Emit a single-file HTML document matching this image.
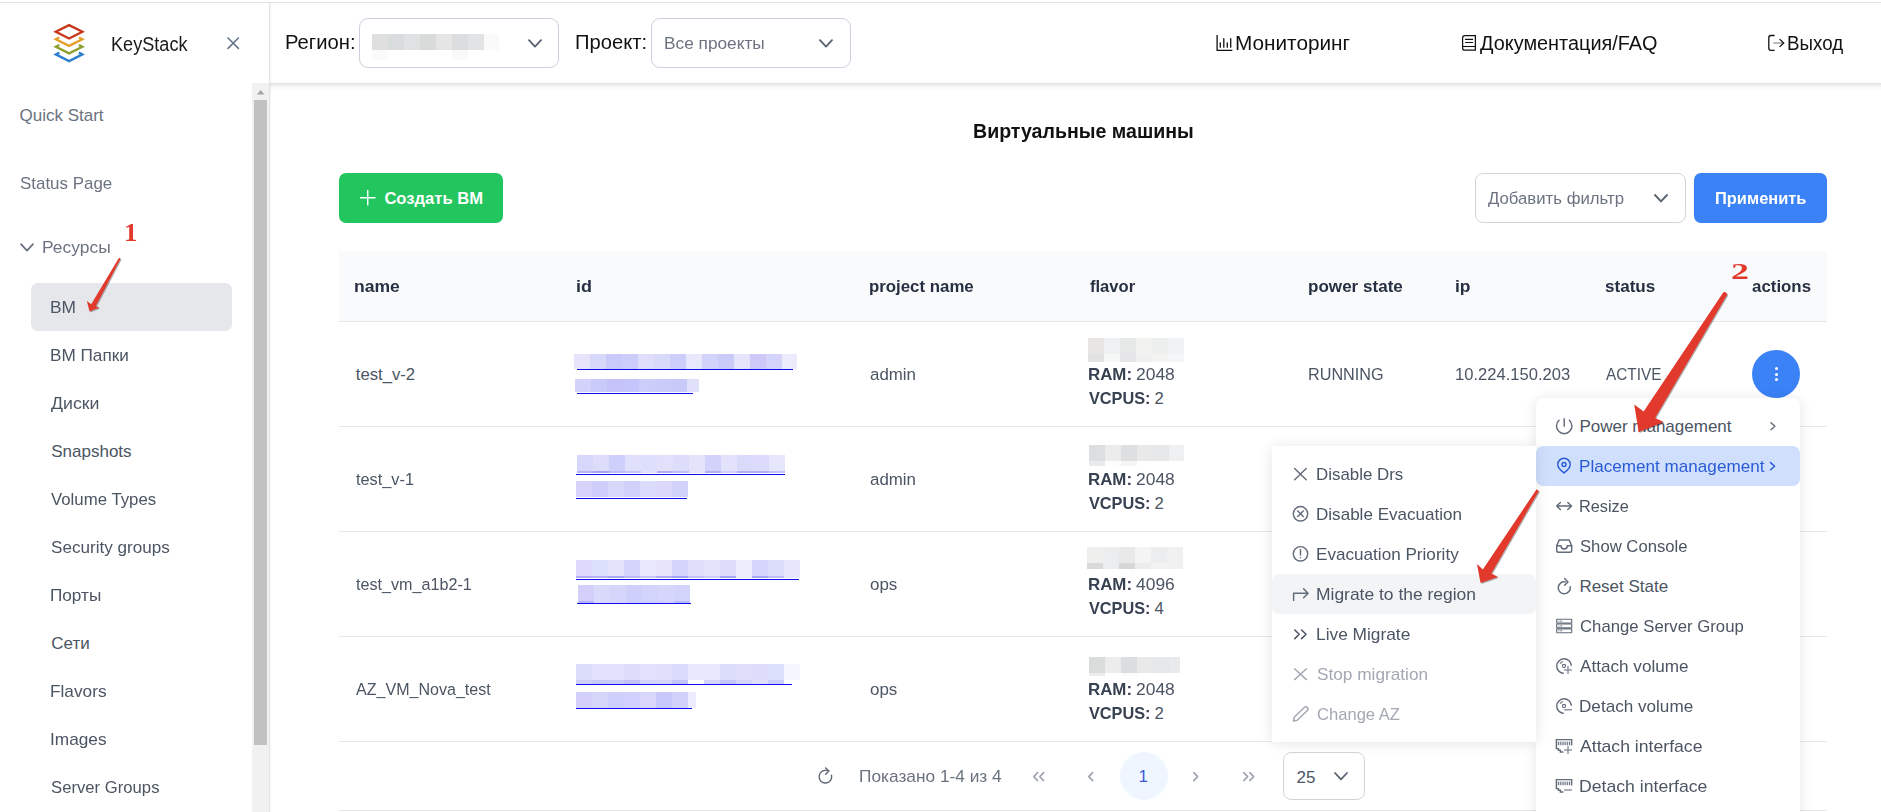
<!DOCTYPE html>
<html lang="ru">
<head>
<meta charset="utf-8">
<title>KeyStack - Виртуальные машины</title>
<style>
html,body{margin:0;padding:0}
body{width:1881px;height:812px;overflow:hidden;background:#fff;position:relative;font-family:"Liberation Sans",sans-serif}
.b{position:absolute;box-sizing:border-box;display:block}
.t{position:absolute;white-space:pre;transform-origin:0 50%;display:block}
svg.b{overflow:visible}
</style>
</head>
<body>
<div class="b" style="left:270px;top:83px;width:1611px;height:9px;background:linear-gradient(180deg,#e0e0e0 0,#e8e8e8 12%,#efefef 24%,#f5f5f5 38%,#f9f9f9 52%,#fcfcfc 70%,#fff 100%)"></div>
<div class="b" style="left:0px;top:2px;width:1881px;height:1px;background:#e2e4e2"></div>
<aside>
<div class="b" style="left:0px;top:3px;width:269px;height:809px;background:#fff"></div>
<div class="b" style="left:269px;top:3px;width:1px;height:809px;background:#e4e4e4"></div>
<div class="b" style="left:270px;top:3px;width:2px;height:809px;background:linear-gradient(90deg,rgba(0,0,0,.045),rgba(0,0,0,0))"></div>
<div class="b" style="left:252px;top:83px;width:17px;height:729px;background:#f1f1f1"></div>
<div class="b" style="left:254px;top:100px;width:13px;height:645px;background:#c1c1c1"></div>
<svg class="b" style="left:256.8px;top:89.8px;" width="7.4" height="4.4" viewBox="0 0 7.4 4.4"><path d="M0 4.4 L3.7 0 L7.4 4.4 Z" fill="#a3a3a3"/></svg>
<svg class="b" style="left:52px;top:22px;" width="35" height="42" viewBox="0 0 35 42">
<g fill="none" stroke-width="2.3" stroke-linejoin="miter">
<path d="M17.1 3.1 L30.4 9.8 L17.1 16.5 L3.8 9.8 Z" stroke="#c8371c"/>
<path d="M7.3 15.45 L3.8 17.2 L17.1 23.9 L30.4 17.2 L26.9 15.45" stroke="#e6a028"/>
<path d="M7.3 22.95 L3.8 24.7 L17.1 31.4 L30.4 24.7 L26.9 22.95" stroke="#8ea02c"/>
<path d="M7.3 30.65 L3.8 32.4 L17.1 39.1 L30.4 32.4 L26.9 30.65" stroke="#2f7fd0"/>
</g></svg>
<span class="t" style="left:111.09px;top:34.00px;font-size:20px;line-height:20px;color:#1a1a1a;transform:scaleX(0.9055);">KeyStack</span>
<svg class="b" style="left:226.8px;top:36.9px;" width="12.4" height="12.4" viewBox="0 0 12.4 12.4"><path d="M0.5 0.5 L11.9 11.9 M11.9 0.5 L0.5 11.9" stroke="#64748b" stroke-width="1.5" fill="none"/></svg>
<span class="t" style="left:19.50px;top:107.00px;font-size:17px;line-height:17px;color:#6b7280;">Quick Start</span>
<span class="t" style="left:19.50px;top:175.00px;font-size:17px;line-height:17px;color:#6b7280;transform:scaleX(0.9955);">Status Page</span>
<svg class="b" style="left:20px;top:243px;" width="14" height="9" viewBox="0 0 14 9"><path d="M1 1.2 L7 7.6 L13 1.2" stroke="#6b7280" stroke-width="1.8" fill="none" stroke-linecap="round" stroke-linejoin="round"/></svg>
<span class="t" style="left:41.97px;top:239.00px;font-size:17px;line-height:17px;color:#6b7280;transform:scaleX(1.0257);">Ресурсы</span>
<div class="b" style="left:31px;top:283px;width:201px;height:47.5px;background:#e5e7eb;border-radius:7px"></div>
<span class="t" style="left:50.23px;top:299.00px;font-size:17px;line-height:17px;color:#4b5563;transform:scaleX(1.0176);">ВМ</span>
<span class="t" style="left:50.24px;top:347.00px;font-size:17px;line-height:17px;color:#4b5563;transform:scaleX(1.0093);">ВМ Папки</span>
<span class="t" style="left:51.25px;top:395.00px;font-size:17px;line-height:17px;color:#4b5563;transform:scaleX(1.0447);">Диски</span>
<span class="t" style="left:51.25px;top:443.00px;font-size:17px;line-height:17px;color:#4b5563;">Snapshots</span>
<span class="t" style="left:51.25px;top:491.00px;font-size:17px;line-height:17px;color:#4b5563;transform:scaleX(0.9879);">Volume Types</span>
<span class="t" style="left:51.25px;top:539.00px;font-size:17px;line-height:17px;color:#4b5563;transform:scaleX(1.0054);">Security groups</span>
<span class="t" style="left:50.24px;top:587.00px;font-size:17px;line-height:17px;color:#4b5563;transform:scaleX(1.0093);">Порты</span>
<span class="t" style="left:51.25px;top:635.00px;font-size:17px;line-height:17px;color:#4b5563;">Сети</span>
<span class="t" style="left:50.24px;top:683.00px;font-size:17px;line-height:17px;color:#4b5563;transform:scaleX(1.0142);">Flavors</span>
<span class="t" style="left:50.24px;top:731.00px;font-size:17px;line-height:17px;color:#4b5563;transform:scaleX(1.0139);">Images</span>
<span class="t" style="left:51.25px;top:779.00px;font-size:17px;line-height:17px;color:#4b5563;transform:scaleX(0.9814);">Server Groups</span>
</aside>
<header>
<span class="t" style="left:284.74px;top:32.00px;font-size:20px;line-height:20px;color:#111;transform:scaleX(1.0116);">Регион:</span>
<div class="b" style="left:359px;top:18px;width:200px;height:49.5px;background:#fff;border:1px solid #cdd0dc;border-radius:9px"></div>
<div class="b" style="left:372px;top:34px;width:16px;height:16px;background:#dedfde"></div>
<div class="b" style="left:388px;top:34px;width:16px;height:16px;background:#d9dcdd"></div>
<div class="b" style="left:404px;top:34px;width:16px;height:16px;background:#e0e1e2"></div>
<div class="b" style="left:420px;top:34px;width:16px;height:16px;background:#d9dada"></div>
<div class="b" style="left:436px;top:34px;width:16px;height:16px;background:#e4e5e4"></div>
<div class="b" style="left:452px;top:34px;width:16px;height:16px;background:#dcdddf"></div>
<div class="b" style="left:468px;top:34px;width:16px;height:16px;background:#e2e3e4"></div>
<div class="b" style="left:484px;top:34px;width:15px;height:16px;background:#fafafa"></div>
<div class="b" style="left:372px;top:50px;width:16px;height:9.7px;background:#fafafa"></div>
<div class="b" style="left:452px;top:50px;width:16px;height:9.7px;background:#f9f9f9"></div>
<svg class="b" style="left:527.5px;top:38.7px;" width="14" height="9" viewBox="0 0 14 9"><path d="M1 1.2 L7 7.6 L13 1.2" stroke="#5b6472" stroke-width="1.9" fill="none" stroke-linecap="round" stroke-linejoin="round"/></svg>
<span class="t" style="left:575.24px;top:32.00px;font-size:20px;line-height:20px;color:#111;transform:scaleX(1.0090);">Проект:</span>
<div class="b" style="left:651px;top:18px;width:200px;height:49.5px;background:#fff;border:1px solid #cdd0dc;border-radius:9px"></div>
<span class="t" style="left:663.98px;top:35.00px;font-size:17px;line-height:17px;color:#6b7280;transform:scaleX(1.0153);">Все проекты</span>
<svg class="b" style="left:818.8px;top:38.7px;" width="14" height="9" viewBox="0 0 14 9"><path d="M1 1.2 L7 7.6 L13 1.2" stroke="#5b6472" stroke-width="1.9" fill="none" stroke-linecap="round" stroke-linejoin="round"/></svg>
<svg class="b" style="left:1215.7px;top:35px;" width="16.5" height="16" viewBox="0 0 16.5 16"><path d="M1.1 0 V15.3 H16.3" fill="none" stroke="#111" stroke-width="1.3"/><path d="M4.3 7.8 V12.2 M7.8 3.7 V12.2 M11.3 7.8 V12.2 M14.7 3.7 V12.2" stroke="#111" stroke-width="1.3" stroke-linecap="round" fill="none"/></svg>
<span class="t" style="left:1234.71px;top:33.00px;font-size:20px;line-height:20px;color:#111;transform:scaleX(1.0376);">Мониторинг</span>
<svg class="b" style="left:1462px;top:35px;" width="14.5" height="16" viewBox="0 0 14.5 16"><path d="M13.4 0.7 H3 Q0.6 0.7 0.6 3.1 V12.9 Q0.6 15.2 3 15.2 H13.4 Z" fill="none" stroke="#111" stroke-width="1.25"/><path d="M3.5 4.4 H10.6 M3.5 7.5 H10.6" stroke="#111" stroke-width="1.1" stroke-linecap="round" fill="none"/><path d="M0.8 11.5 H13.4" stroke="#111" stroke-width="1.1" fill="none"/></svg>
<span class="t" style="left:1480.00px;top:33.00px;font-size:20px;line-height:20px;color:#111;transform:scaleX(0.9939);">Документация/FAQ</span>
<svg class="b" style="left:1768px;top:35px;" width="17" height="16" viewBox="0 0 17 16"><path d="M6.6 0.5 H3 Q0.8 0.5 0.8 2.7 V13.1 Q0.8 15.3 3 15.3 H6.6" fill="none" stroke="#111" stroke-width="1.3"/><path d="M5.2 8 H15" fill="none" stroke="#777" stroke-width="1"/><path d="M11.6 4.1 L15.7 8 L11.6 11.9" fill="none" stroke="#111" stroke-width="1.3"/></svg>
<span class="t" style="left:1787.41px;top:33.00px;font-size:20px;line-height:20px;color:#111;transform:scaleX(0.9379);">Выход</span>
</header>
<main>
<span class="t" style="left:972.69px;top:122.00px;font-size:19.4px;line-height:19.4px;color:#111;font-weight:700;transform:scaleX(1.0094);">Виртуальные машины</span>
<div class="b" style="left:339px;top:173px;width:164px;height:50px;background:#22c55e;border-radius:7px"></div>
<svg class="b" style="left:360.2px;top:190.2px;" width="15.5" height="15.5" viewBox="0 0 15.5 15.5"><path d="M7.75 0 V15.5 M0 7.75 H15.5" stroke="#fff" stroke-width="1.4" fill="none"/></svg>
<span class="t" style="left:384.40px;top:191.00px;font-size:16.6px;line-height:16.6px;color:#fff;font-weight:700;">Создать ВМ</span>
<div class="b" style="left:1475px;top:173px;width:211px;height:50px;background:#fff;border:1px solid #d1d5db;border-radius:8px"></div>
<span class="t" style="left:1488.30px;top:191.00px;font-size:16.7px;line-height:16.7px;color:#6b7280;transform:scaleX(1.0037);">Добавить фильтр</span>
<svg class="b" style="left:1654px;top:194.2px;" width="14" height="8.4" viewBox="0 0 14 8.4"><path d="M1 1 L7 7.4 L13 1" stroke="#5b6472" stroke-width="1.9" fill="none" stroke-linecap="round" stroke-linejoin="round"/></svg>
<div class="b" style="left:1694px;top:173px;width:133px;height:50px;background:#3b82f6;border-radius:7px"></div>
<span class="t" style="left:1714.50px;top:190.00px;font-size:16.4px;line-height:16.4px;color:#fff;font-weight:700;transform:scaleX(1.0032);">Применить</span>
<section>
<div class="b" style="left:339px;top:251px;width:1488px;height:70px;background:#f9fafb"></div>
<div class="b" style="left:339px;top:321px;width:1488px;height:1px;background:#e5e7eb"></div>
<div class="b" style="left:339px;top:426px;width:1488px;height:1px;background:#e5e7eb"></div>
<div class="b" style="left:339px;top:531px;width:1488px;height:1px;background:#e5e7eb"></div>
<div class="b" style="left:339px;top:636px;width:1488px;height:1px;background:#e5e7eb"></div>
<div class="b" style="left:339px;top:741px;width:1488px;height:1px;background:#e5e7eb"></div>
<div class="b" style="left:339px;top:810px;width:1488px;height:1px;background:#e5e7eb"></div>
<span class="t" style="left:353.97px;top:278.00px;font-size:17px;line-height:17px;color:#273043;font-weight:700;transform:scaleX(1.0302);">name</span>
<span class="t" style="left:575.69px;top:278.00px;font-size:17px;line-height:17px;color:#273043;font-weight:700;transform:scaleX(1.0566);">id</span>
<span class="t" style="left:869.01px;top:278.00px;font-size:17px;line-height:17px;color:#273043;font-weight:700;transform:scaleX(0.9894);">project name</span>
<span class="t" style="left:1089.50px;top:278.00px;font-size:17px;line-height:17px;color:#273043;font-weight:700;transform:scaleX(0.9748);">flavor</span>
<span class="t" style="left:1307.90px;top:278.00px;font-size:17px;line-height:17px;color:#273043;font-weight:700;transform:scaleX(1.0041);">power state</span>
<span class="t" style="left:1455.27px;top:278.00px;font-size:17px;line-height:17px;color:#273043;font-weight:700;transform:scaleX(1.0275);">ip</span>
<span class="t" style="left:1605.40px;top:278.00px;font-size:17px;line-height:17px;color:#273043;font-weight:700;transform:scaleX(1.0037);">status</span>
<span class="t" style="left:1752.40px;top:278.00px;font-size:17px;line-height:17px;color:#273043;font-weight:700;transform:scaleX(0.9922);">actions</span>
<span class="t" style="left:355.75px;top:367.00px;font-size:16.7px;line-height:16.7px;color:#4b5563;">test_v-2</span>
<div class="b" style="left:574px;top:354px;width:16px;height:14.6px;background:#e6e3fb"></div>
<div class="b" style="left:590px;top:354px;width:16px;height:14.6px;background:#d8d8fa"></div>
<div class="b" style="left:606px;top:354px;width:16px;height:14.6px;background:#cacafa"></div>
<div class="b" style="left:622px;top:354px;width:16px;height:14.6px;background:#cccdfa"></div>
<div class="b" style="left:638px;top:354px;width:16px;height:14.6px;background:#dfdffb"></div>
<div class="b" style="left:654px;top:354px;width:16px;height:14.6px;background:#d9d9fa"></div>
<div class="b" style="left:670px;top:354px;width:16px;height:14.6px;background:#cecefa"></div>
<div class="b" style="left:686px;top:354px;width:16px;height:14.6px;background:#e8e8fc"></div>
<div class="b" style="left:702px;top:354px;width:16px;height:14.6px;background:#d2d2fa"></div>
<div class="b" style="left:718px;top:354px;width:16px;height:14.6px;background:#cbcbf9"></div>
<div class="b" style="left:734px;top:354px;width:16px;height:14.6px;background:#e4e4fb"></div>
<div class="b" style="left:750px;top:354px;width:16px;height:14.6px;background:#cdc8f8"></div>
<div class="b" style="left:766px;top:354px;width:16px;height:14.6px;background:#d4d4fa"></div>
<div class="b" style="left:782px;top:354px;width:15px;height:14.6px;background:#ebebfc"></div>
<div class="b" style="left:576.5px;top:369px;width:216.25px;height:1.3px;background:#0d0df0"></div>
<div class="b" style="left:575px;top:379px;width:16px;height:12.8px;background:#d2d2fa"></div>
<div class="b" style="left:591px;top:379px;width:16px;height:12.8px;background:#cacafa"></div>
<div class="b" style="left:607px;top:379px;width:16px;height:12.8px;background:#c5c2fa"></div>
<div class="b" style="left:623px;top:379px;width:16px;height:12.8px;background:#c3c5fb"></div>
<div class="b" style="left:639px;top:379px;width:16px;height:12.8px;background:#cdcdfa"></div>
<div class="b" style="left:655px;top:379px;width:16px;height:12.8px;background:#cbcbfa"></div>
<div class="b" style="left:671px;top:379px;width:16px;height:12.8px;background:#c9c9f9"></div>
<div class="b" style="left:687px;top:379px;width:12px;height:12.8px;background:#e0e0fb"></div>
<div class="b" style="left:576.5px;top:392.8px;width:116.6px;height:1.3px;background:#0d0df0"></div>
<span class="t" style="left:870.30px;top:367.00px;font-size:16.7px;line-height:16.7px;color:#4b5563;transform:scaleX(1.0117);">admin</span>
<div class="b" style="left:1088px;top:338px;width:16px;height:15.7px;background:#e7e6e4"></div>
<div class="b" style="left:1088px;top:353.7px;width:16px;height:8.2px;background:#e2e4e3"></div>
<div class="b" style="left:1104px;top:338px;width:16px;height:15.7px;background:#eff0f3"></div>
<div class="b" style="left:1104px;top:353.7px;width:16px;height:8.2px;background:#f6f8f7"></div>
<div class="b" style="left:1120px;top:338px;width:16px;height:15.7px;background:#e6e8e7"></div>
<div class="b" style="left:1120px;top:353.7px;width:16px;height:8.2px;background:#e6e6e8"></div>
<div class="b" style="left:1136px;top:338px;width:16px;height:15.7px;background:#f2f2f0"></div>
<div class="b" style="left:1136px;top:353.7px;width:16px;height:8.2px;background:#f0f0f0"></div>
<div class="b" style="left:1152px;top:338px;width:16px;height:15.7px;background:#edefee"></div>
<div class="b" style="left:1152px;top:353.7px;width:16px;height:8.2px;background:#f3f3f2"></div>
<div class="b" style="left:1168px;top:338px;width:16px;height:15.7px;background:#f1f2f5"></div>
<div class="b" style="left:1168px;top:353.7px;width:16px;height:8.2px;background:#f5f6f8"></div>
<span class="t" style="left:1088.38px;top:366.00px;font-size:16.5px;line-height:16.5px;color:#374151;font-weight:700;transform:scaleX(1.0228);">RAM:</span>
<span class="t" style="left:1135.75px;top:367.00px;font-size:16.7px;line-height:16.7px;color:#4b5563;transform:scaleX(1.0450);">2048</span>
<span class="t" style="left:1089.40px;top:390.00px;font-size:16.5px;line-height:16.5px;color:#374151;font-weight:700;transform:scaleX(0.9861);">VCPUS:</span>
<span class="t" style="left:1154.50px;top:391.00px;font-size:16.7px;line-height:16.7px;color:#4b5563;">2</span>
<span class="t" style="left:355.75px;top:472.00px;font-size:16.7px;line-height:16.7px;color:#4b5563;transform:scaleX(0.9775);">test_v-1</span>
<div class="b" style="left:577px;top:455px;width:16px;height:16px;background:#d7d7fb"></div>
<div class="b" style="left:577px;top:471px;width:16px;height:1.8px;background:#b5b5f6"></div>
<div class="b" style="left:593px;top:455px;width:16px;height:16px;background:#dedcfb"></div>
<div class="b" style="left:593px;top:471px;width:16px;height:1.8px;background:#a6a3f4"></div>
<div class="b" style="left:609px;top:455px;width:16px;height:16px;background:#cfcffb"></div>
<div class="b" style="left:609px;top:471px;width:16px;height:1.8px;background:#bcbcf7"></div>
<div class="b" style="left:625px;top:455px;width:16px;height:16px;background:#e0dffc"></div>
<div class="b" style="left:625px;top:471px;width:16px;height:1.8px;background:#c4c4f8"></div>
<div class="b" style="left:641px;top:455px;width:16px;height:16px;background:#dedffc"></div>
<div class="b" style="left:641px;top:471px;width:16px;height:1.8px;background:#e0e0fb"></div>
<div class="b" style="left:657px;top:455px;width:16px;height:16px;background:#e3e0fc"></div>
<div class="b" style="left:657px;top:471px;width:16px;height:1.8px;background:#b0adf5"></div>
<div class="b" style="left:673px;top:455px;width:16px;height:16px;background:#dedcfb"></div>
<div class="b" style="left:673px;top:471px;width:16px;height:1.8px;background:#bdbdf7"></div>
<div class="b" style="left:689px;top:455px;width:16px;height:16px;background:#e3e3fc"></div>
<div class="b" style="left:689px;top:471px;width:16px;height:1.8px;background:#e3e3fc"></div>
<div class="b" style="left:705px;top:455px;width:16px;height:16px;background:#d3d2fb"></div>
<div class="b" style="left:705px;top:471px;width:16px;height:1.8px;background:#b0b0f5"></div>
<div class="b" style="left:721px;top:455px;width:16px;height:16px;background:#e2e2fc"></div>
<div class="b" style="left:721px;top:471px;width:16px;height:1.8px;background:#cfcff9"></div>
<div class="b" style="left:737px;top:455px;width:16px;height:16px;background:#dadafb"></div>
<div class="b" style="left:737px;top:471px;width:16px;height:1.8px;background:#b2b0f5"></div>
<div class="b" style="left:753px;top:455px;width:16px;height:16px;background:#dcdbfb"></div>
<div class="b" style="left:753px;top:471px;width:16px;height:1.8px;background:#aeaef4"></div>
<div class="b" style="left:769px;top:455px;width:16px;height:16px;background:#e6e6fc"></div>
<div class="b" style="left:769px;top:471px;width:16px;height:1.8px;background:#c3c3f7"></div>
<div class="b" style="left:576.25px;top:473.8px;width:209.0px;height:1.3px;background:#0d0df0"></div>
<div class="b" style="left:576px;top:481px;width:16px;height:15.6px;background:#d6d4fb"></div>
<div class="b" style="left:592px;top:481px;width:16px;height:15.6px;background:#cfcefb"></div>
<div class="b" style="left:608px;top:481px;width:16px;height:15.6px;background:#d7d7fb"></div>
<div class="b" style="left:624px;top:481px;width:16px;height:15.6px;background:#d0d0fb"></div>
<div class="b" style="left:640px;top:481px;width:16px;height:15.6px;background:#dbdbfb"></div>
<div class="b" style="left:656px;top:481px;width:16px;height:15.6px;background:#dad8fb"></div>
<div class="b" style="left:672px;top:481px;width:16px;height:15.6px;background:#d1d3fb"></div>
<div class="b" style="left:576.25px;top:497.8px;width:110.65px;height:1.3px;background:#0d0df0"></div>
<span class="t" style="left:870.30px;top:472.00px;font-size:16.7px;line-height:16.7px;color:#4b5563;transform:scaleX(1.0117);">admin</span>
<div class="b" style="left:1089px;top:445px;width:16px;height:15.8px;background:#dddee0"></div>
<div class="b" style="left:1089px;top:460.8px;width:16px;height:5.1px;background:#e9eaec"></div>
<div class="b" style="left:1105px;top:445px;width:16px;height:15.8px;background:#ececec"></div>
<div class="b" style="left:1105px;top:460.8px;width:16px;height:5.1px;background:#fdfdfd"></div>
<div class="b" style="left:1121px;top:445px;width:16px;height:15.8px;background:#dedfe1"></div>
<div class="b" style="left:1121px;top:460.8px;width:16px;height:5.1px;background:#f5f5f5"></div>
<div class="b" style="left:1137px;top:445px;width:16px;height:15.8px;background:#e9e9e9"></div>
<div class="b" style="left:1137px;top:460.8px;width:16px;height:5.1px;background:#ffffff"></div>
<div class="b" style="left:1153px;top:445px;width:16px;height:15.8px;background:#e6e7e8"></div>
<div class="b" style="left:1153px;top:460.8px;width:16px;height:5.1px;background:#ffffff"></div>
<div class="b" style="left:1169px;top:445px;width:15px;height:15.8px;background:#eff0f1"></div>
<div class="b" style="left:1169px;top:460.8px;width:15px;height:5.1px;background:#ffffff"></div>
<span class="t" style="left:1088.38px;top:471.00px;font-size:16.5px;line-height:16.5px;color:#374151;font-weight:700;transform:scaleX(1.0228);">RAM:</span>
<span class="t" style="left:1135.75px;top:472.00px;font-size:16.7px;line-height:16.7px;color:#4b5563;transform:scaleX(1.0450);">2048</span>
<span class="t" style="left:1089.40px;top:495.00px;font-size:16.5px;line-height:16.5px;color:#374151;font-weight:700;transform:scaleX(0.9861);">VCPUS:</span>
<span class="t" style="left:1154.50px;top:496.00px;font-size:16.7px;line-height:16.7px;color:#4b5563;">2</span>
<span class="t" style="left:355.75px;top:577.00px;font-size:16.7px;line-height:16.7px;color:#4b5563;transform:scaleX(0.9679);">test_vm_a1b2-1</span>
<div class="b" style="left:576px;top:560px;width:16px;height:16px;background:#dfd9fb"></div>
<div class="b" style="left:576px;top:576px;width:16px;height:1.8px;background:#b2b0f5"></div>
<div class="b" style="left:592px;top:560px;width:16px;height:16px;background:#dcdffc"></div>
<div class="b" style="left:592px;top:576px;width:16px;height:1.8px;background:#b3b3f6"></div>
<div class="b" style="left:608px;top:560px;width:16px;height:16px;background:#e3e3fc"></div>
<div class="b" style="left:608px;top:576px;width:16px;height:1.8px;background:#a8a8f5"></div>
<div class="b" style="left:624px;top:560px;width:16px;height:16px;background:#d5d5fb"></div>
<div class="b" style="left:624px;top:576px;width:16px;height:1.8px;background:#bdb9f6"></div>
<div class="b" style="left:640px;top:560px;width:16px;height:16px;background:#e8e8fd"></div>
<div class="b" style="left:640px;top:576px;width:16px;height:1.8px;background:#c9c9f8"></div>
<div class="b" style="left:656px;top:560px;width:16px;height:16px;background:#e7e4fc"></div>
<div class="b" style="left:656px;top:576px;width:16px;height:1.8px;background:#b4acf4"></div>
<div class="b" style="left:672px;top:560px;width:16px;height:16px;background:#d5d5fb"></div>
<div class="b" style="left:672px;top:576px;width:16px;height:1.8px;background:#a4a4f4"></div>
<div class="b" style="left:688px;top:560px;width:16px;height:16px;background:#dfdffc"></div>
<div class="b" style="left:688px;top:576px;width:16px;height:1.8px;background:#c3c3f7"></div>
<div class="b" style="left:704px;top:560px;width:16px;height:16px;background:#e3e3fc"></div>
<div class="b" style="left:704px;top:576px;width:16px;height:1.8px;background:#cdcdf9"></div>
<div class="b" style="left:720px;top:560px;width:16px;height:16px;background:#dddcfb"></div>
<div class="b" style="left:720px;top:576px;width:16px;height:1.8px;background:#a9a9f5"></div>
<div class="b" style="left:736px;top:560px;width:16px;height:16px;background:#ededfd"></div>
<div class="b" style="left:736px;top:576px;width:16px;height:1.8px;background:#ededfd"></div>
<div class="b" style="left:752px;top:560px;width:16px;height:16px;background:#d6d5fb"></div>
<div class="b" style="left:752px;top:576px;width:16px;height:1.8px;background:#a9a9f5"></div>
<div class="b" style="left:768px;top:560px;width:16px;height:16px;background:#dcdcfb"></div>
<div class="b" style="left:768px;top:576px;width:16px;height:1.8px;background:#bdbdf7"></div>
<div class="b" style="left:784px;top:560px;width:16px;height:16px;background:#e6e6fc"></div>
<div class="b" style="left:784px;top:576px;width:16px;height:1.8px;background:#e6e6fc"></div>
<div class="b" style="left:576.25px;top:578.8px;width:222.75px;height:1.3px;background:#0d0df0"></div>
<div class="b" style="left:578px;top:585px;width:16px;height:16px;background:#d2d0fb"></div>
<div class="b" style="left:578px;top:601px;width:16px;height:1.6px;background:#b6b4f6"></div>
<div class="b" style="left:594px;top:585px;width:16px;height:16px;background:#d8d9fb"></div>
<div class="b" style="left:594px;top:601px;width:16px;height:1.6px;background:#d8d9fb"></div>
<div class="b" style="left:610px;top:585px;width:16px;height:16px;background:#d6d5fb"></div>
<div class="b" style="left:610px;top:601px;width:16px;height:1.6px;background:#d6d5fb"></div>
<div class="b" style="left:626px;top:585px;width:16px;height:16px;background:#cfcffb"></div>
<div class="b" style="left:626px;top:601px;width:16px;height:1.6px;background:#cfcffb"></div>
<div class="b" style="left:642px;top:585px;width:16px;height:16px;background:#d3d4fb"></div>
<div class="b" style="left:642px;top:601px;width:16px;height:1.6px;background:#cdcdf9"></div>
<div class="b" style="left:658px;top:585px;width:16px;height:16px;background:#d6d5fb"></div>
<div class="b" style="left:658px;top:601px;width:16px;height:1.6px;background:#d0d0fa"></div>
<div class="b" style="left:674px;top:585px;width:16px;height:16px;background:#d3d4fb"></div>
<div class="b" style="left:674px;top:601px;width:16px;height:1.6px;background:#b9b9f7"></div>
<div class="b" style="left:576.5px;top:602.8px;width:114.1px;height:1.3px;background:#0d0df0"></div>
<span class="t" style="left:870.30px;top:577.00px;font-size:16.7px;line-height:16.7px;color:#4b5563;transform:scaleX(1.0165);">ops</span>
<div class="b" style="left:1087px;top:547px;width:16px;height:15.8px;background:#efefed"></div>
<div class="b" style="left:1087px;top:562.8px;width:16px;height:6.0px;background:#d8dad9"></div>
<div class="b" style="left:1103px;top:547px;width:16px;height:15.8px;background:#ecedef"></div>
<div class="b" style="left:1103px;top:562.8px;width:16px;height:6.0px;background:#ecedef"></div>
<div class="b" style="left:1119px;top:547px;width:16px;height:15.8px;background:#e9e9e9"></div>
<div class="b" style="left:1119px;top:562.8px;width:16px;height:6.0px;background:#d7d7d7"></div>
<div class="b" style="left:1135px;top:547px;width:16px;height:15.8px;background:#f4f4f4"></div>
<div class="b" style="left:1135px;top:562.8px;width:16px;height:6.0px;background:#ebecee"></div>
<div class="b" style="left:1151px;top:547px;width:16px;height:15.8px;background:#ecedef"></div>
<div class="b" style="left:1151px;top:562.8px;width:16px;height:6.0px;background:#f1f2f1"></div>
<div class="b" style="left:1167px;top:547px;width:16px;height:15.8px;background:#f0f1f0"></div>
<div class="b" style="left:1167px;top:562.8px;width:16px;height:6.0px;background:#f0f1f0"></div>
<span class="t" style="left:1088.38px;top:576.00px;font-size:16.5px;line-height:16.5px;color:#374151;font-weight:700;transform:scaleX(1.0228);">RAM:</span>
<span class="t" style="left:1135.75px;top:577.00px;font-size:16.7px;line-height:16.7px;color:#4b5563;transform:scaleX(1.0450);">4096</span>
<span class="t" style="left:1089.40px;top:600.00px;font-size:16.5px;line-height:16.5px;color:#374151;font-weight:700;transform:scaleX(0.9861);">VCPUS:</span>
<span class="t" style="left:1154.50px;top:601.00px;font-size:16.7px;line-height:16.7px;color:#4b5563;">4</span>
<span class="t" style="left:355.75px;top:682.00px;font-size:16.7px;line-height:16.7px;color:#4b5563;transform:scaleX(0.9618);">AZ_VM_Nova_test</span>
<div class="b" style="left:576px;top:664px;width:16px;height:16px;background:#dcdcfb"></div>
<div class="b" style="left:576px;top:680px;width:16px;height:3.6px;background:#cfcffa"></div>
<div class="b" style="left:592px;top:664px;width:16px;height:16px;background:#e3e2fc"></div>
<div class="b" style="left:592px;top:680px;width:16px;height:3.6px;background:#c8c8f9"></div>
<div class="b" style="left:608px;top:664px;width:16px;height:16px;background:#e2e2fc"></div>
<div class="b" style="left:608px;top:680px;width:16px;height:3.6px;background:#cacaf9"></div>
<div class="b" style="left:624px;top:664px;width:16px;height:16px;background:#dddcfb"></div>
<div class="b" style="left:624px;top:680px;width:16px;height:3.6px;background:#c3c0f8"></div>
<div class="b" style="left:640px;top:664px;width:16px;height:16px;background:#e2e2fc"></div>
<div class="b" style="left:640px;top:680px;width:16px;height:3.6px;background:#d2d2fa"></div>
<div class="b" style="left:656px;top:664px;width:16px;height:16px;background:#e1e0fc"></div>
<div class="b" style="left:656px;top:680px;width:16px;height:3.6px;background:#d5d5fa"></div>
<div class="b" style="left:672px;top:664px;width:16px;height:16px;background:#dadafb"></div>
<div class="b" style="left:672px;top:680px;width:16px;height:3.6px;background:#c4c4f8"></div>
<div class="b" style="left:688px;top:664px;width:16px;height:16px;background:#e9e9fd"></div>
<div class="b" style="left:688px;top:680px;width:16px;height:3.6px;background:#ffffff"></div>
<div class="b" style="left:704px;top:664px;width:16px;height:16px;background:#e8e8fc"></div>
<div class="b" style="left:704px;top:680px;width:16px;height:3.6px;background:#d5d5fa"></div>
<div class="b" style="left:720px;top:664px;width:16px;height:16px;background:#dcdcfb"></div>
<div class="b" style="left:720px;top:680px;width:16px;height:3.6px;background:#c5c5f8"></div>
<div class="b" style="left:736px;top:664px;width:16px;height:16px;background:#dedefb"></div>
<div class="b" style="left:736px;top:680px;width:16px;height:3.6px;background:#d5d5fa"></div>
<div class="b" style="left:752px;top:664px;width:16px;height:16px;background:#dddcfb"></div>
<div class="b" style="left:752px;top:680px;width:16px;height:3.6px;background:#e0e0fb"></div>
<div class="b" style="left:768px;top:664px;width:16px;height:16px;background:#dbdffc"></div>
<div class="b" style="left:768px;top:680px;width:16px;height:3.6px;background:#cdcdf9"></div>
<div class="b" style="left:784px;top:664px;width:16px;height:16px;background:#f6f6fe"></div>
<div class="b" style="left:784px;top:680px;width:16px;height:3.6px;background:#ffffff"></div>
<div class="b" style="left:576.25px;top:683.8px;width:216.0px;height:1.3px;background:#0d0df0"></div>
<div class="b" style="left:576px;top:692px;width:16px;height:15.6px;background:#d2d0fb"></div>
<div class="b" style="left:592px;top:692px;width:16px;height:15.6px;background:#d6d6fb"></div>
<div class="b" style="left:608px;top:692px;width:16px;height:15.6px;background:#cfcffb"></div>
<div class="b" style="left:624px;top:692px;width:16px;height:15.6px;background:#d1cffb"></div>
<div class="b" style="left:640px;top:692px;width:16px;height:15.6px;background:#d8d6fb"></div>
<div class="b" style="left:656px;top:692px;width:16px;height:15.6px;background:#c8c8fa"></div>
<div class="b" style="left:672px;top:692px;width:16px;height:15.6px;background:#d0d0fb"></div>
<div class="b" style="left:688px;top:692px;width:8px;height:15.6px;background:#ebebfd"></div>
<div class="b" style="left:576.25px;top:707.8px;width:115.35px;height:1.3px;background:#0d0df0"></div>
<span class="t" style="left:870.30px;top:682.00px;font-size:16.7px;line-height:16.7px;color:#4b5563;transform:scaleX(1.0165);">ops</span>
<div class="b" style="left:1089px;top:657px;width:16px;height:15.8px;background:#dadcdb"></div>
<div class="b" style="left:1089px;top:672.75px;width:16px;height:3.1px;background:#ebecec"></div>
<div class="b" style="left:1105px;top:657px;width:16px;height:15.8px;background:#ececec"></div>
<div class="b" style="left:1105px;top:672.75px;width:16px;height:3.1px;background:#ffffff"></div>
<div class="b" style="left:1121px;top:657px;width:16px;height:15.8px;background:#dcdddf"></div>
<div class="b" style="left:1121px;top:672.75px;width:16px;height:3.1px;background:#fafafa"></div>
<div class="b" style="left:1137px;top:657px;width:16px;height:15.8px;background:#e9e9e9"></div>
<div class="b" style="left:1137px;top:672.75px;width:16px;height:3.1px;background:#ffffff"></div>
<div class="b" style="left:1153px;top:657px;width:16px;height:15.8px;background:#e6e7e8"></div>
<div class="b" style="left:1153px;top:672.75px;width:16px;height:3.1px;background:#ffffff"></div>
<div class="b" style="left:1169px;top:657px;width:11px;height:15.8px;background:#e9eaeb"></div>
<div class="b" style="left:1169px;top:672.75px;width:11px;height:3.1px;background:#ffffff"></div>
<span class="t" style="left:1088.38px;top:681.00px;font-size:16.5px;line-height:16.5px;color:#374151;font-weight:700;transform:scaleX(1.0228);">RAM:</span>
<span class="t" style="left:1135.75px;top:682.00px;font-size:16.7px;line-height:16.7px;color:#4b5563;transform:scaleX(1.0450);">2048</span>
<span class="t" style="left:1089.40px;top:705.00px;font-size:16.5px;line-height:16.5px;color:#374151;font-weight:700;transform:scaleX(0.9861);">VCPUS:</span>
<span class="t" style="left:1154.50px;top:706.00px;font-size:16.7px;line-height:16.7px;color:#4b5563;">2</span>
<span class="t" style="left:1308.03px;top:367.00px;font-size:16.7px;line-height:16.7px;color:#4b5563;transform:scaleX(0.9711);">RUNNING</span>
<span class="t" style="left:1455.41px;top:367.00px;font-size:16.7px;line-height:16.7px;color:#4b5563;transform:scaleX(0.9929);">10.224.150.203</span>
<span class="t" style="left:1605.60px;top:367.00px;font-size:16.7px;line-height:16.7px;color:#4b5563;transform:scaleX(0.9195);">ACTIVE</span>
<div class="b" style="left:1752px;top:350px;width:48px;height:48px;background:#3b82f6;border-radius:50%"></div>
<div class="b" style="left:1774.5px;top:367.1px;width:3px;height:3px;background:#fff;border-radius:50%"></div>
<div class="b" style="left:1774.5px;top:372.6px;width:3px;height:3px;background:#fff;border-radius:50%"></div>
<div class="b" style="left:1774.5px;top:378.1px;width:3px;height:3px;background:#fff;border-radius:50%"></div>
</section>
<nav>
<svg class="b" style="left:0px;top:0px;" width="1881" height="812" viewBox="0 0 1881 812"><g fill="none" stroke="#5b6472" stroke-width="1.4" stroke-linecap="round" stroke-linejoin="round"><path d="M827 770.6 A6.3 6.3 0 1 0 831.5 775.1"/><path d="M825.6 767.9 L829 771 L825.6 774.3"/></g></svg>
<span class="t" style="left:858.98px;top:768.00px;font-size:17px;line-height:17px;color:#6b7280;transform:scaleX(1.0168);">Показано 1-4 из 4</span>
<svg class="b" style="left:1033px;top:772px;" width="12" height="9.2" viewBox="0 0 12 9.2"><path d="M4.6 0.6 L0.8 4.6 L4.6 8.6 M10.6 0.6 L6.8 4.6 L10.6 8.6" fill="none" stroke="#9ca3af" stroke-width="1.6" stroke-linecap="round" stroke-linejoin="round"/></svg>
<svg class="b" style="left:1088px;top:772px;" width="6" height="9.2" viewBox="0 0 6 9.2"><path d="M4.6 0.6 L0.8 4.6 L4.6 8.6" fill="none" stroke="#9ca3af" stroke-width="1.6" stroke-linecap="round" stroke-linejoin="round"/></svg>
<div class="b" style="left:1119.6px;top:752px;width:48px;height:48px;background:#eff6ff;border-radius:50%"></div>
<span class="t" style="left:1138.50px;top:768.00px;font-size:17px;line-height:17px;color:#3b5bdb;">1</span>
<svg class="b" style="left:1192.8px;top:772px;" width="6" height="9.2" viewBox="0 0 6 9.2"><path d="M0.8 0.6 L4.6 4.6 L0.8 8.6" fill="none" stroke="#9ca3af" stroke-width="1.6" stroke-linecap="round" stroke-linejoin="round"/></svg>
<svg class="b" style="left:1243px;top:772px;" width="12" height="9.2" viewBox="0 0 12 9.2"><path d="M0.8 0.6 L4.6 4.6 L0.8 8.6 M6.8 0.6 L10.6 4.6 L6.8 8.6" fill="none" stroke="#9ca3af" stroke-width="1.6" stroke-linecap="round" stroke-linejoin="round"/></svg>
<div class="b" style="left:1283px;top:752px;width:82px;height:48px;background:#fff;border:1px solid #d1d5db;border-radius:8px"></div>
<span class="t" style="left:1296.50px;top:769.00px;font-size:17px;line-height:17px;color:#4b5563;">25</span>
<svg class="b" style="left:1333.5px;top:771.8px;" width="14" height="8.4" viewBox="0 0 14 8.4"><path d="M1 1 L7 7.4 L13 1" stroke="#5b6472" stroke-width="1.8" fill="none" stroke-linecap="round" stroke-linejoin="round"/></svg>
</nav>
</main>
<div role="menu">
<div class="b" style="left:1536px;top:398px;width:264px;height:430px;background:#fff;border-radius:7px;box-shadow:0 1px 13px rgba(0,0,0,.11)"></div>
<div class="b" style="left:1536px;top:446px;width:264px;height:40px;background:#d0e0fc;border-radius:7px"></div>
<span class="t" style="left:1579.40px;top:418.00px;font-size:17px;line-height:17px;color:#4b5563;">Power management</span>
<span class="t" style="left:1579.39px;top:458.00px;font-size:17px;line-height:17px;color:#2a5bd7;transform:scaleX(1.0063);">Placement management</span>
<span class="t" style="left:1579.44px;top:498.00px;font-size:17px;line-height:17px;color:#4b5563;transform:scaleX(0.9583);">Resize</span>
<span class="t" style="left:1580.40px;top:538.00px;font-size:17px;line-height:17px;color:#4b5563;transform:scaleX(0.9811);">Show Console</span>
<span class="t" style="left:1579.40px;top:578.00px;font-size:17px;line-height:17px;color:#4b5563;">Reset State</span>
<span class="t" style="left:1580.40px;top:618.00px;font-size:17px;line-height:17px;color:#4b5563;transform:scaleX(0.9846);">Change Server Group</span>
<span class="t" style="left:1580.40px;top:658.00px;font-size:17px;line-height:17px;color:#4b5563;transform:scaleX(1.0078);">Attach volume</span>
<span class="t" style="left:1579.39px;top:698.00px;font-size:17px;line-height:17px;color:#4b5563;transform:scaleX(1.0068);">Detach volume</span>
<span class="t" style="left:1580.40px;top:738.00px;font-size:17px;line-height:17px;color:#4b5563;transform:scaleX(1.0368);">Attach interface</span>
<span class="t" style="left:1579.36px;top:778.00px;font-size:17px;line-height:17px;color:#4b5563;transform:scaleX(1.0373);">Detach interface</span>
<svg class="b" style="left:0px;top:0px;" width="1881" height="812" viewBox="0 0 1881 812"><g fill="none" stroke="#636c7a" stroke-width="1.45" stroke-linecap="round" stroke-linejoin="round" ><path d="M1559 420.3 A7.7 7.7 0 1 0 1569.4 420.3 M1564.2 418.7 V426.2"/></g><g fill="none" stroke="#2a5bd7" stroke-width="1.45" stroke-linecap="round" stroke-linejoin="round" ><path d="M1564 472.9 C1564 472.9 1557.8 468.4 1557.8 464.5 A6.2 6.2 0 0 1 1570.2 464.5 C1570.2 468.4 1564 472.9 1564 472.9 Z"/><circle cx="1564" cy="464.4" r="2"/></g><g fill="none" stroke="#636c7a" stroke-width="1.45" stroke-linecap="round" stroke-linejoin="round" ><path d="M1556.9 506 H1571.3 M1560.4 502.4 L1556.7 506 L1560.4 509.6 M1567.8 502.4 L1571.5 506 L1567.8 509.6"/></g><g fill="none" stroke="#636c7a" stroke-width="1.45" stroke-linecap="round" stroke-linejoin="round" ><path d="M1559.3 539.9 H1569.1 L1571.7 545.8 V550.5 Q1571.7 552.3 1569.9 552.3 H1558.5 Q1556.7 552.3 1556.7 550.5 V545.8 Z"/><path d="M1556.7 545.8 H1561 Q1561 549 1564.2 549 Q1567.4 549 1567.4 545.8 H1571.7"/></g><g fill="none" stroke="#636c7a" stroke-width="1.45" stroke-linecap="round" stroke-linejoin="round" ><path d="M1565.3 581.9 A6 6 0 1 0 1570.2 586.8"/><path d="M1564.6 578.6 L1568 581.9 L1564.6 585.2"/></g><g fill="none" stroke="#636c7a" stroke-width="1.15" stroke-linecap="round" stroke-linejoin="round" ><rect x="1556.7" y="619.2" width="15" height="3.9" rx=".4"/><rect x="1556.7" y="624" width="15" height="3.9" rx=".4"/><rect x="1556.7" y="628.8" width="15" height="3.9" rx=".4"/><path d="M1558.8 621.15 h.3 M1560.6 621.15 h1.2 M1558.8 625.95 h.3 M1560.6 625.95 h1.2 M1558.8 630.75 h.3 M1560.6 630.75 h1.2" stroke-width=".9"/></g><g fill="none" stroke="#636c7a" stroke-width="1.45" stroke-linecap="round" stroke-linejoin="round" ><path d="M1563.2 673.3 A7.3 7.3 0 1 1 1571.3 665.2"/><circle cx="1564" cy="666" r="1.6" stroke-width="1.1"/><path d="M1560.3 663.2 L1562.5 661.6" stroke-width="1.1"/><path d="M1564.6 670 H1571.4 M1568 666.6 V673.4" stroke="#8e95a2" stroke-width="1.5"/></g><g fill="none" stroke="#636c7a" stroke-width="1.45" stroke-linecap="round" stroke-linejoin="round" ><path d="M1563.2 713.3 A7.3 7.3 0 1 1 1571.3 705.2"/><circle cx="1564" cy="706" r="1.6" stroke-width="1.1"/><path d="M1560.3 703.2 L1562.5 701.6" stroke-width="1.1"/><path d="M1564.6 709.8 H1571.4" stroke="#8e95a2" stroke-width="1.5"/></g><g fill="none" stroke="#636c7a" stroke-width="1.45" stroke-linecap="round" stroke-linejoin="round" ><path d="M1571.6 745.6 V739.6 H1556.4 V748.6 H1558.4 V750.2 H1560.4 V752 H1563.4" stroke-linejoin="miter" stroke-linecap="butt"/><path d="M1558.40 741.6 V745.2 M1560.25 741.6 V745.2 M1562.10 741.6 V745.2 M1563.95 741.6 V745.2 M1565.80 741.6 V745.2 M1567.65 741.6 V745.2 M1569.50 741.6 V745.2 " stroke-width="1" stroke-linecap="butt"/><path d="M1564.6 750 H1571.4 M1568 746.6 V753.4" stroke="#8e95a2" stroke-width="1.5"/></g><g fill="none" stroke="#636c7a" stroke-width="1.45" stroke-linecap="round" stroke-linejoin="round" ><path d="M1571.6 785.6 V779.6 H1556.4 V788.6 H1558.4 V790.2 H1560.4 V792 H1563.4" stroke-linejoin="miter" stroke-linecap="butt"/><path d="M1558.40 781.6 V785.2 M1560.25 781.6 V785.2 M1562.10 781.6 V785.2 M1563.95 781.6 V785.2 M1565.80 781.6 V785.2 M1567.65 781.6 V785.2 M1569.50 781.6 V785.2 " stroke-width="1" stroke-linecap="butt"/><path d="M1564.6 790 H1571.4" stroke="#8e95a2" stroke-width="1.5"/></g><g fill="none" stroke="#636c7a" stroke-width="1.4" stroke-linecap="round" stroke-linejoin="round" ><path d="M1771 422.8 L1774.9 426.3 L1771 429.8"/></g><g fill="none" stroke="#2a5bd7" stroke-width="1.5" stroke-linecap="round" stroke-linejoin="round" ><path d="M1770.6 462.6 L1774.6 466.2 L1770.6 469.8"/></g></svg>
</div>
<div role="menu">
<div class="b" style="left:1272px;top:446px;width:264px;height:296px;background:#fff;box-shadow:0 1px 13px rgba(0,0,0,.11)"></div>
<div class="b" style="left:1272px;top:574px;width:264px;height:40px;background:#f3f4f6;border-radius:7px"></div>
<span class="t" style="left:1315.81px;top:466.00px;font-size:17px;line-height:17px;color:#4b5563;transform:scaleX(0.9936);">Disable Drs</span>
<span class="t" style="left:1315.80px;top:506.00px;font-size:17px;line-height:17px;color:#4b5563;transform:scaleX(1.0036);">Disable Evacuation</span>
<span class="t" style="left:1315.79px;top:546.00px;font-size:17px;line-height:17px;color:#4b5563;transform:scaleX(1.0069);">Evacuation Priority</span>
<span class="t" style="left:1315.77px;top:586.00px;font-size:17px;line-height:17px;color:#4b5563;transform:scaleX(1.0261);">Migrate to the region</span>
<span class="t" style="left:1315.78px;top:626.00px;font-size:17px;line-height:17px;color:#4b5563;transform:scaleX(1.0182);">Live Migrate</span>
<span class="t" style="left:1316.80px;top:666.00px;font-size:17px;line-height:17px;color:#a3a8b3;transform:scaleX(1.0132);">Stop migration</span>
<span class="t" style="left:1316.80px;top:706.00px;font-size:17px;line-height:17px;color:#a3a8b3;transform:scaleX(0.9753);">Change AZ</span>
<svg class="b" style="left:0px;top:0px;" width="1881" height="812" viewBox="0 0 1881 812"><g fill="none" stroke="#636c7a" stroke-width="1.45" stroke-linecap="round" stroke-linejoin="round" ><path d="M1294.6 468.6 L1306.2 479.8 M1306.2 468.6 L1294.6 479.8"/></g><g fill="none" stroke="#636c7a" stroke-width="1.45" stroke-linecap="round" stroke-linejoin="round" ><circle cx="1300.5" cy="513.8" r="7.2"/><path d="M1297.7 511 L1303.3 516.6 M1303.3 511 L1297.7 516.6"/></g><g fill="none" stroke="#636c7a" stroke-width="1.45" stroke-linecap="round" stroke-linejoin="round" ><circle cx="1300.5" cy="553.8" r="7.2"/><path d="M1300.5 549.6 V555"/><path d="M1300.5 557.6 V557.8"/></g><g fill="none" stroke="#636c7a" stroke-width="1.45" stroke-linecap="round" stroke-linejoin="round" ><path d="M1293.6 600.4 V593.3 H1307.8 M1303.6 588.8 L1308 593.3 L1303.6 597.8"/></g><g fill="none" stroke="#4b5563" stroke-width="1.6" stroke-linecap="round" stroke-linejoin="round" ><path d="M1294.8 630 L1299.2 634.3 L1294.8 638.6 M1301.6 630 L1306 634.3 L1301.6 638.6"/></g><g fill="none" stroke="#a3a8b3" stroke-width="1.45" stroke-linecap="round" stroke-linejoin="round" ><path d="M1294.6 668.8 L1306.4 679.6 M1306.4 668.8 L1294.6 679.6"/></g><g fill="none" stroke="#a3a8b3" stroke-width="1.45" stroke-linecap="round" stroke-linejoin="round" ><path d="M1293.4 721 L1294.2 717.3 L1304.3 707.4 Q1305.9 706 1307.4 707.5 Q1308.8 709 1307.3 710.6 L1297.2 720.3 Z"/></g></svg>
</div>
<span class="t" style="left:123.70px;top:221.00px;font-size:24.5px;line-height:24.5px;color:#e2392d;font-weight:700;font-family:'Liberation Serif', serif;transform:scaleX(1.1000);">1</span>
<span class="t" style="left:1731.00px;top:260.00px;font-size:23.5px;line-height:23.5px;color:#e2392d;font-weight:700;font-family:'Liberation Serif', serif;transform:scaleX(1.5273);">2</span>
<svg class="b" style="left:0px;top:0px;" width="1881" height="812" viewBox="0 0 1881 812">
<g fill="#e2392d" style="filter:drop-shadow(1px 1.2px 0.5px rgba(0,0,0,.3))">
<path d="M119 257.8 L120.6 258.8 L95.7 306.2 L99.3 307.5 L89.5 311.4 L86.9 301 L91.2 304.3 Z"/>
<path d="M1723.2 292.6 Q1725.6 291 1727.3 294.6 L1655.1 417.9 L1663.7 421.9 L1638.7 432.1 L1634.2 404.5 L1643.6 411.6 Z"/>
<path d="M1536.6 489.3 L1538.9 491 L1491.4 573.5 L1497.9 576.9 L1480.6 583 L1476.9 564 L1482.8 569.4 Z"/>
</g></svg>
</body>
</html>
